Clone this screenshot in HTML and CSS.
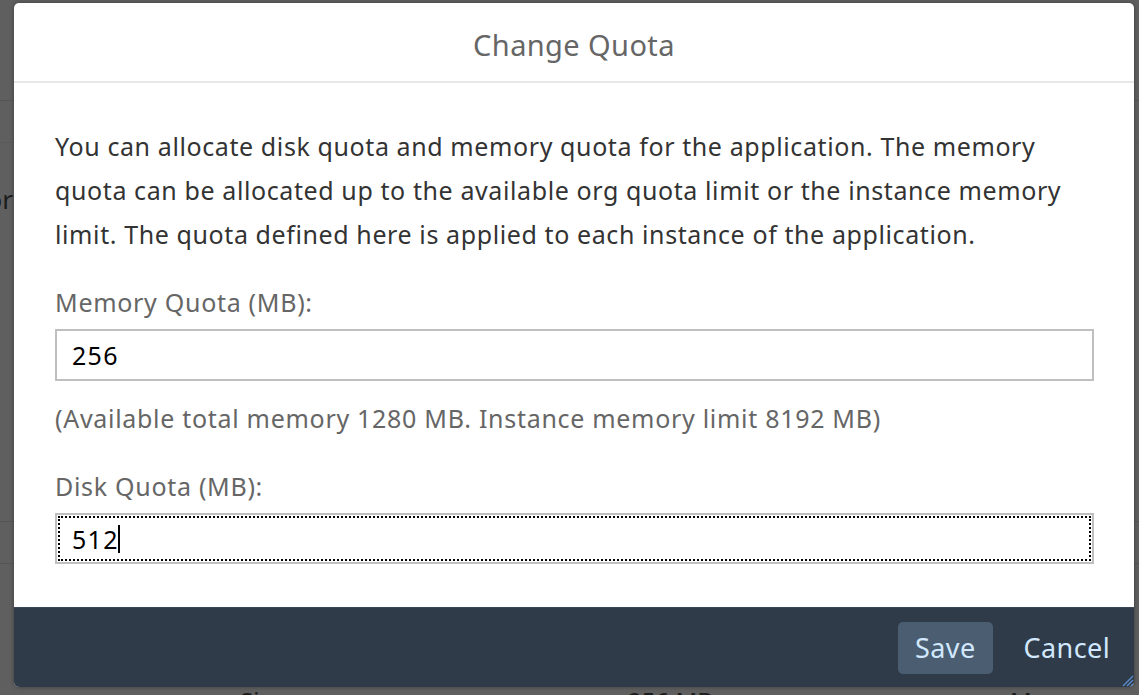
FILE: index.html
```html
<!DOCTYPE html>
<html lang="en">
<head>
<meta charset="utf-8">
<title>Change Quota</title>
<link rel="stylesheet" href="styles.css">
</head>
<body>
<div class="backdrop">
  <div class="bg-top"></div>
  <div class="bg-row"></div>
  <div class="bg-label"><span class="bg-word">Monitor</span></div>
  <div class="bg-spacer"></div>
  <div class="bg-row2"></div>
  <div class="bg-row3"></div>
  <div class="bg-bottom">
    <span class="bg-cell c1">Size</span>
    <span class="bg-cell c2">256 MB</span>
    <span class="bg-cell c3">Memory</span>
  </div>
</div>

<div class="dialog" role="dialog" aria-labelledby="dlg-title">
  <header class="dlg-header">
    <h1 id="dlg-title" class="dlg-title">Change Quota</h1>
  </header>
  <section class="dlg-body">
    <p class="intro">You can allocate disk quota and memory quota for the application. The memory quota can be allocated up to the available org quota limit or the instance memory limit. The quota defined here is applied to each instance of the application.</p>
    <label class="field-label" for="mem">Memory Quota (MB):</label>
    <input id="mem" class="field-input" type="text" value="256">
    <p class="note">(Available total memory 1280 MB. Instance memory limit 8192 MB)</p>
    <label class="field-label label-disk" for="disk">Disk Quota (MB):</label>
    <div class="field-input focused" id="disk"><span class="val">512</span><span class="caret"></span></div>
  </section>
  <footer class="dlg-footer">
    <button class="btn btn-primary" type="button">Save</button>
    <button class="btn btn-plain" type="button">Cancel</button>
    <svg class="resize" width="14" height="14" viewBox="0 0 14 14" aria-hidden="true">
      <path d="M13 3 L3 13 M13 7 L7 13 M13 11 L11 13" stroke="#5b8fd0" stroke-width="1.3" fill="none"/>
    </svg>
  </footer>
</div>
</body>
</html>
```

FILE: styles.css
```css
* { box-sizing: border-box; }
html, body { margin: 0; padding: 0; }
body {
  width: 1139px;
  height: 695px;
  overflow: hidden;
  background: #5f5f5f;
  font-family: "Noto Sans", "Open Sans", Arial, sans-serif;
  position: relative;
}

/* dimmed page behind the dialog */
.backdrop {
  display: flex;
  flex-direction: column;
  height: 695px;
  color: #1c1c1c;
}
.bg-top { height: 101px; border-bottom: 1px solid #555; flex: none; }
.bg-row { height: 42px; border-bottom: 1px solid #5a5a5a; flex: none; }
.bg-label {
  height: 90px;
  width: 13px;
  font-size: 26px;
  line-height: 26px;
  padding-top: 43px;
  white-space: nowrap;
  flex: none;
  display: flex;
  justify-content: flex-end;
}
.bg-spacer { height: 288px; flex: none; }
.bg-row2 { height: 1px; background: #555; flex: none; }
.bg-row3 { height: 42px; border-bottom: 1px solid #555; flex: none; }
.bg-bottom { position: relative; flex: 1; font-size: 24px; }
.bg-cell { position: absolute; top: 120px; }
.c1 { left: 240px; }
.c2 { left: 628px; }
.c3 { left: 1010px; }

/* dialog */
.dialog {
  position: absolute;
  left: 14px;
  top: 3px;
  width: 1120px;
  height: 684px;
  background: #fff;
  border-radius: 5px;
  overflow: hidden;
  display: flex;
  flex-direction: column;
  box-shadow: 0 0 4px rgba(0,0,0,0.35);
}
.dlg-header {
  height: 80px;
  flex: none;
  border-bottom: 2px solid #e8e8e8;
  display: flex;
  align-items: center;
  justify-content: center;
}
.dlg-title {
  margin: 0;
  font-size: 29px;
  letter-spacing: 0.4px;
  font-weight: normal;
  color: #666;
  padding-top: 4px;
}
.dlg-body {
  flex: 1;
  padding: 41px 41px 0 41px;
  display: flex;
  flex-direction: column;
}
.intro {
  margin: 0;
  font-size: 25px;
  letter-spacing: 0.6px;
  line-height: 44px;
  color: #333;
}
.field-label {
  display: block;
  margin-top: 28px;
  font-size: 25px;
  letter-spacing: 0.7px;
  line-height: 36px;
  color: #666;
}
.label-disk { margin-top: 32px; }
.field-input {
  display: flex;
  align-items: center;
  width: 1039px;
  height: 52px;
  margin-top: 9px;
  border: 2px solid #bfbfbf;
  padding: 0 15px;
  font-family: inherit;
  font-size: 25px;
  letter-spacing: 1.3px;
  color: #000;
  background: #fff;
  outline: none;
}
.field-input.focused {
  outline: 2px dotted #000;
  outline-offset: -5px;
  height: 51px;
}
.caret {
  display: inline-block;
  width: 2px;
  height: 28px;
  background: #000;
  margin-left: -1px;
}
.note {
  margin: 19px 0 0 0;
  font-size: 25px;
  letter-spacing: 0.7px;
  line-height: 36px;
  color: #666;
}

/* footer */
.dlg-footer {
  height: 80px;
  flex: none;
  background: #2f3b48;
  border-top: 1px solid #394654;
  display: flex;
  align-items: center;
  justify-content: flex-end;
  padding: 0 8px 0 0;
  gap: 15px;
  position: relative;
}
.btn {
  height: 52px;
  padding: 0 17px;
  border: none;
  border-radius: 5px;
  font-family: inherit;
  font-size: 27px;
  letter-spacing: 0.4px;
  color: #d1e8ff;
  background: transparent;
}
.btn-plain { padding: 0 16px; }
.btn-primary { background: #4a5d71; }
.resize {
  position: absolute;
  right: 0;
  bottom: 0;
}
```
